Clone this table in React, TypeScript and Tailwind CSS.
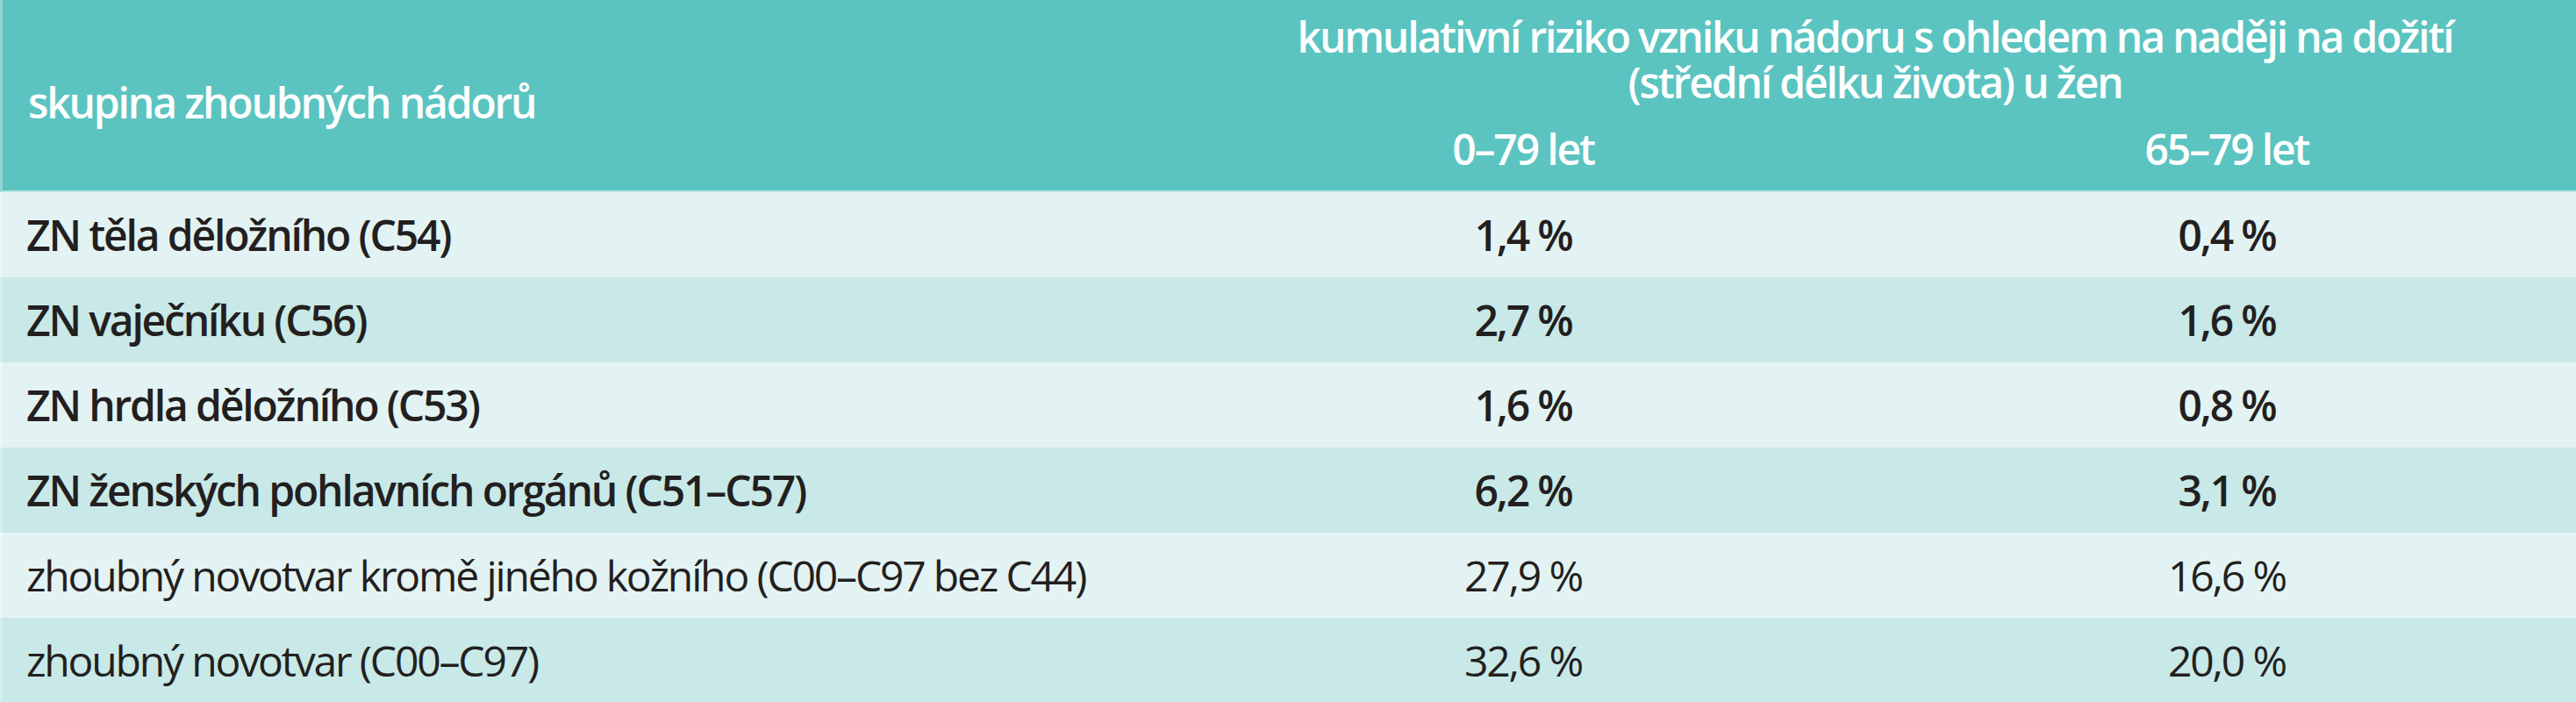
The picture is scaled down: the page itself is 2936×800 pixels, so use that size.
const rows = [
  { label: 'ZN těla děložního (C54)', a: '1,4 %', b: '0,4 %', bold: true },
  { label: 'ZN vaječníku (C56)', a: '2,7 %', b: '1,6 %', bold: true },
  { label: 'ZN hrdla děložního (C53)', a: '1,6 %', b: '0,8 %', bold: true },
  { label: 'ZN ženských pohlavních orgánů (C51–C57)', a: '6,2 %', b: '3,1 %', bold: true },
  { label: 'zhoubný novotvar kromě jiného kožního (C00–C97 bez C44)', a: '27,9 %', b: '16,6 %', bold: false },
  { label: 'zhoubný novotvar (C00–C97)', a: '32,6 %', b: '20,0 %', bold: false }
]

const App = () => {
  return (
    <div
      className="w-[2936px] h-[800px] overflow-hidden text-[48px] tracking-[-0.045em] text-[#231f20]"
      style={{ fontFamily: '"Open Sans", "Noto Sans", sans-serif' }}
    >
      {/* header */}
      <div className="grid grid-cols-[1332px_802px_802px] grid-rows-[140px_77px] h-[219px] bg-[#5bc4c1] border-b-2 border-[#b6e4e2] border-l-[3px] border-l-[#93d6d3] text-white font-semibold">
        <div className="row-span-2 flex items-center pl-[29px] pt-[16px] leading-none">
          skupina zhoubných nádorů
        </div>
        <div className="col-span-2 pt-[16px] text-center leading-[52px]">
          <div>kumulativní riziko vzniku nádoru s ohledem na naději na dožití</div>
          <div>(střední délku života) u žen</div>
        </div>
        <div className="flex items-center justify-center pb-[18px] leading-none">0–79 let</div>
        <div className="flex items-center justify-center pb-[18px] leading-none">65–79 let</div>
      </div>

      {rows.map((r, i) => (
        <div
          key={r.label}
          className={
            i % 2 === 0
              ? 'grid grid-cols-[1332px_802px_802px] h-[97px] items-center bg-[#e3f3f3] border-l-[3px] border-l-[#ecf8f8]'
              : 'grid grid-cols-[1332px_802px_802px] h-[97px] items-center bg-[#c8e9e8] border-l-[3px] border-l-[#d4eeed]'
          }
        >
          <div className={r.bold ? 'pl-[27px] font-semibold leading-none' : 'pl-[27px] font-normal leading-none'}>
            {r.label}
          </div>
          <div className={r.bold ? 'text-center font-semibold leading-none' : 'text-center font-normal leading-none'}>
            {r.a}
          </div>
          <div className={r.bold ? 'text-center font-semibold leading-none' : 'text-center font-normal leading-none'}>
            {r.b}
          </div>
        </div>
      ))}
    </div>
  )
}

export default App
